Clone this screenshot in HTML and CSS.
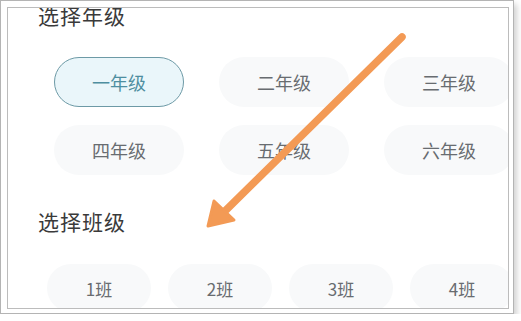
FILE: index.html
```html
<!DOCTYPE html>
<html>
<head>
  <meta charset="utf-8">
  <link rel="stylesheet" href="styles.css">
</head>
<body>
  <div class="frame">
    <div class="panel">
      <div class="section-title title-grade">选择年级</div>
      <div class="grade-grid">
        <div class="pill active">一年级</div>
        <div class="pill">二年级</div>
        <div class="pill">三年级</div>
        <div class="pill">四年级</div>
        <div class="pill">五年级</div>
        <div class="pill">六年级</div>
      </div>

      <div class="section-title title-class">选择班级</div>
      <div class="class-grid">
        <div class="pill">1班</div>
        <div class="pill">2班</div>
        <div class="pill">3班</div>
        <div class="pill">4班</div>
      </div>

      <!-- annotation arrow drawn over the screenshot -->
      <svg class="arrow" width="501" height="300" viewBox="0 0 501 300">
        <line x1="394" y1="29" x2="213" y2="207" stroke="#f39a55" stroke-width="7.5" stroke-linecap="round"/>
        <polygon points="200,218 206,193 226,212" fill="#f39a55" stroke="#f39a55" stroke-width="3" stroke-linejoin="round"/>
      </svg>
    </div>
  </div>
</body>
</html>
```

FILE: styles.css
```css
body {
  margin: 0;
  background: #ffffff;
  font-family: "Noto Sans CJK SC", "Noto Sans", sans-serif;
}

.frame {
  width: 512px;
  height: 312px;
  border: 1px solid #b4b4b4;
  background: #ffffff;
  box-shadow: 3px 4px 6px rgba(0, 0, 0, 0.18);
}

.panel {
  position: relative;
  margin: 6px 0 0 6px;
  width: 502px;
  height: 302px;
  border: 1px solid #bcbcbc;
  overflow: hidden;
  padding-left: 30px;
  box-sizing: border-box;
}

.section-title {
  font-size: 21px;
  line-height: 24px;
  color: #3a3a3a;
  letter-spacing: 1px;
}

.title-grade {
  margin-top: -5px;
}

.title-class {
  margin-top: 34px;
}

.pill {
  display: flex;
  align-items: center;
  justify-content: center;
  height: 50px;
  border-radius: 25px;
  background: #f8f9fa;
  color: #686c70;
  font-size: 18px;
  box-sizing: border-box;
}

.pill.active {
  background: #eaf6fa;
  border: 1.5px solid #6d9aa6;
  color: #4e8ea0;
}

.grade-grid {
  display: grid;
  grid-template-columns: repeat(3, 130px);
  gap: 18px 35px;
  margin: 30px 0 0 16px;
}

.class-grid {
  display: grid;
  grid-template-columns: repeat(4, 104px);
  gap: 17px;
  margin: 31px 0 0 9px;
}

.class-grid .pill {
  height: 48px;
  border-radius: 24px;
  font-size: 17px;
}

.arrow {
  position: absolute;
  left: 0;
  top: 0;
  pointer-events: none;
}
```
